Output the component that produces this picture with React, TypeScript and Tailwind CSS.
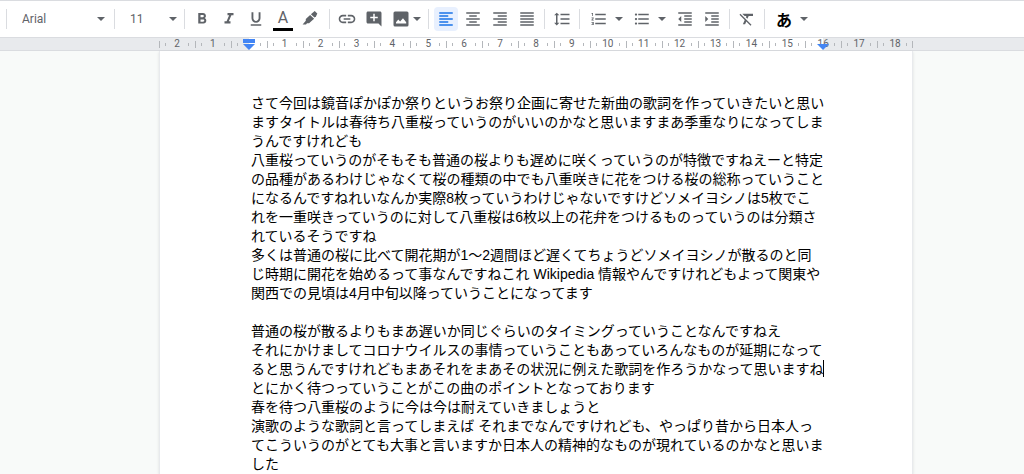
import type { ReactNode } from 'react';
import {
  MdAddComment,
  MdFormatAlignCenter,
  MdFormatAlignJustify,
  MdFormatAlignLeft,
  MdFormatAlignRight,
  MdFormatBold,
  MdFormatClear,
  MdFormatIndentDecrease,
  MdFormatIndentIncrease,
  MdFormatItalic,
  MdFormatLineSpacing,
  MdFormatListBulleted,
  MdFormatListNumbered,
  MdFormatUnderlined,
  MdInsertLink,
} from 'react-icons/md';

const paragraphs: string[][] = [
  [
    'さて今回は鏡音ぽかぽか祭りというお祭り企画に寄せた新曲の歌詞を作っていきたいと思い',
    'ますタイトルは春待ち八重桜っていうのがいいのかなと思いますまあ季重なりになってしま',
    'うんですけれども',
  ],
  [
    '八重桜っていうのがそもそも普通の桜よりも遅めに咲くっていうのが特徴ですねえーと特定',
    'の品種があるわけじゃなくて桜の種類の中でも八重咲きに花をつける桜の総称っていうこと',
    'になるんですねれいなんか実際8枚っていうわけじゃないですけどソメイヨシノは5枚でこ',
    'れを一重咲きっていうのに対して八重桜は6枚以上の花弁をつけるものっていうのは分類さ',
    'れているそうですね',
  ],
  [
    '多くは普通の桜に比べて開花期が1〜2週間ほど遅くてちょうどソメイヨシノが散るのと同',
    'じ時期に開花を始めるって事なんですねこれ Wikipedia 情報やんですけれどもよって関東や',
    '関西での見頃は4月中旬以降っていうことになってます',
  ],
  [''],
  ['普通の桜が散るよりもまあ遅いか同じぐらいのタイミングっていうことなんですねえ'],
  [
    'それにかけましてコロナウイルスの事情っていうこともあっていろんなものが延期になって',
    'ると思うんですけれどもまあそれをまあその状況に例えた歌詞を作ろうかなって思いますね',
    'とにかく待つっていうことがこの曲のポイントとなっております',
  ],
  ['春を待つ八重桜のように今は今は耐えていきましょうと'],
  [
    '演歌のような歌詞と言ってしまえば それまでなんですけれども、やっぱり昔から日本人っ',
    'てこういうのがとても大事と言いますか日本人の精神的なものが現れているのかなと思いま',
    'した',
  ],
];

// Paragraph and line the text cursor is on
const cursor = { paragraph: 5, line: 1 };

// Centimetre marks, counted from the left margin
const marks = Array.from({ length: 21 }, (_, i) => i - 2);

function Caret() {
  return (
    <svg viewBox="0 0 8 4" className="h-1 w-2 shrink-0 fill-[#5f6368]" aria-hidden="true">
      <path d="M0 0h8L4 4z" />
    </svg>
  );
}

function Divider() {
  return <div className="mx-[2px] h-5 w-px shrink-0 bg-[#dadce0]" />;
}

function ToolButton({
  label,
  active = false,
  children,
}: {
  label: string;
  active?: boolean;
  children: ReactNode;
}) {
  return (
    <button
      type="button"
      aria-label={label}
      aria-pressed={active}
      className={`flex size-6 shrink-0 items-center justify-center rounded-sm text-lg ${
        active ? 'bg-[#e8f0fe] text-[#1a73e8]' : 'text-[#5f6368]'
      }`}
    >
      {children}
    </button>
  );
}

function MenuButton({ label }: { label: string }) {
  return (
    <button type="button" aria-label={label} className="flex h-6 w-4 shrink-0 items-center justify-center">
      <Caret />
    </button>
  );
}

function HighlightIcon() {
  return (
    <svg viewBox="0 0 18 18" className="size-[18px] fill-current" aria-hidden="true">
      <path d="M11.4 2.9 13.7 1l2.6 2.6-1.2 2.6-1.6 1.4-3.6-3.4z" />
      <path d="m9.1 5 4 3.8-3.4 2.9-1.6 1.5H6l-1 1.2H1.6l3.2-3.6V9z" />
    </svg>
  );
}

function ImageIcon() {
  return (
    <svg viewBox="0 0 18 18" className="size-[18px]" aria-hidden="true">
      <rect x="1.5" y="1.5" width="15" height="15" rx="1.5" fill="currentColor" />
      <path d="M4 13.4v-1.2l2.3-2.6 1.8 1.8L11 8.2l3.2 4v1.2z" fill="#fff" />
    </svg>
  );
}

function Toolbar() {
  return (
    <div role="toolbar" className="flex h-[37px] items-center gap-[3px] border-t border-[#dadce0] bg-white pl-1">
      <Divider />
      <label className="flex items-center pr-1 pl-[10px]">
        <select
          aria-label="フォント"
          defaultValue="Arial"
          className="w-[75px] appearance-none bg-transparent text-[12px] leading-5 text-[#5f6368]"
        >
          <option>Arial</option>
        </select>
        <Caret />
      </label>
      <Divider />
      <label className="flex items-center pr-[2px] pl-[10px]">
        <select
          aria-label="フォントサイズ"
          defaultValue="11"
          className="w-[39px] appearance-none bg-transparent text-[12px] leading-5 text-[#5f6368]"
        >
          <option>11</option>
        </select>
        <Caret />
      </label>
      <Divider />
      <div className="flex gap-[3px] pr-[2px]">
        <ToolButton label="太字"><MdFormatBold /></ToolButton>
        <ToolButton label="斜体"><MdFormatItalic /></ToolButton>
        <ToolButton label="下線"><MdFormatUnderlined /></ToolButton>
        <ToolButton label="テキストの色">
          <span className="flex flex-col items-center text-[16px] leading-5">
            A
            <span className="h-[3px] w-5 bg-black" />
          </span>
        </ToolButton>
        <ToolButton label="ハイライトの色"><HighlightIcon /></ToolButton>
      </div>
      <Divider />
      <ToolButton label="リンクを挿入"><MdInsertLink className="size-5" /></ToolButton>
      <ToolButton label="コメントを追加"><MdAddComment /></ToolButton>
      <div className="flex pr-[2px]">
        <ToolButton label="画像を挿入"><ImageIcon /></ToolButton>
        <button type="button" aria-label="画像のオプション" className="flex h-6 items-center">
          <Caret />
        </button>
      </div>
      <Divider />
      <ToolButton label="左揃え" active><MdFormatAlignLeft /></ToolButton>
      <ToolButton label="中央揃え"><MdFormatAlignCenter /></ToolButton>
      <ToolButton label="右揃え"><MdFormatAlignRight /></ToolButton>
      <ToolButton label="両端揃え"><MdFormatAlignJustify /></ToolButton>
      <Divider />
      <ToolButton label="行間隔"><MdFormatLineSpacing /></ToolButton>
      <Divider />
      <div className="flex pl-[2px]">
        <ToolButton label="番号付きリスト"><MdFormatListNumbered /></ToolButton>
        <MenuButton label="番号付きリストのオプション" />
      </div>
      <div className="flex">
        <ToolButton label="箇条書き"><MdFormatListBulleted /></ToolButton>
        <MenuButton label="箇条書きのオプション" />
      </div>
      <ToolButton label="インデント減"><MdFormatIndentDecrease /></ToolButton>
      <ToolButton label="インデント増"><MdFormatIndentIncrease /></ToolButton>
      <Divider />
      <ToolButton label="書式をクリア"><MdFormatClear /></ToolButton>
      <Divider />
      <div className="flex pl-[2px]">
        <ToolButton label="入力ツール">
          <span className="font-['Noto_Sans_CJK_JP',sans-serif] text-[16px] leading-6 font-bold text-black">あ</span>
        </ToolButton>
        <MenuButton label="入力ツールのオプション" />
      </div>
    </div>
  );
}

function markBackground(mark: number) {
  if (mark < 0 || mark > 16) return 'bg-[#e8eaed]';
  if (mark === 0) return 'bg-linear-to-r from-[#e8eaed] from-50% to-white to-50%';
  if (mark === 16) return 'bg-linear-to-r from-white from-50% to-[#e8eaed] to-50%';
  return 'bg-white';
}

function Ruler() {
  return (
    <div className="border-y border-[#dadce0] bg-[#e8eaed] pl-12">
      <div className="mx-auto grid h-3 w-[754px] grid-cols-21">
        {marks.map((mark) => (
          <div key={mark} className={`relative flex items-center justify-between ${markBackground(mark)}`}>
            <span className="h-[7px] w-px bg-[#b4b7bb]" />
            <span className="h-[3px] w-px bg-[#b4b7bb]" />
            <span className="w-3 text-center text-[10px] leading-3 text-[#5f6368]">
              {mark === 0 ? '' : Math.abs(mark)}
            </span>
            <span className="h-[3px] w-px bg-[#b4b7bb]" />
            <span className={mark === 18 ? 'h-[7px] w-px bg-[#b4b7bb]' : 'w-px'} />
            {mark === 0 && (
              <svg viewBox="0 0 12 11" className="absolute top-px left-3 h-[11px] w-3 fill-[#4285f4]">
                <path d="M0 0h12v4H0zM0 5h12l-6 6z" />
              </svg>
            )}
            {mark === 16 && (
              <svg viewBox="0 0 12 6" className="absolute bottom-0 left-3 h-1.5 w-3 fill-[#4285f4]">
                <path d="M0 0h12L6 6z" />
              </svg>
            )}
          </div>
        ))}
      </div>
    </div>
  );
}

function Page() {
  return (
    <article className="mx-auto w-[754px] border-x border-[#e8eaed] bg-white px-[91px] pt-[43px] font-['Liberation_Sans','Noto_Sans_CJK_JP',sans-serif] text-[14px] leading-[19px] whitespace-nowrap text-black shadow-sm">
      {paragraphs.map((lines, p) => (
        <p key={p} className="min-h-[19px]">
          {lines.map((line, l) => (
            <span key={l} className="flex h-[19px]">
              {line}
              {cursor.paragraph === p && cursor.line === l && (
                <span className="-ml-px h-[17px] w-px shrink-0 bg-black" />
              )}
            </span>
          ))}
        </p>
      ))}
    </article>
  );
}

export default function App() {
  return (
    <div className="flex min-h-screen flex-col bg-[#f8faf9] font-[Roboto,sans-serif]">
      <Toolbar />
      <Ruler />
      <main className="flex flex-1 pl-12">
        <Page />
      </main>
    </div>
  );
}
